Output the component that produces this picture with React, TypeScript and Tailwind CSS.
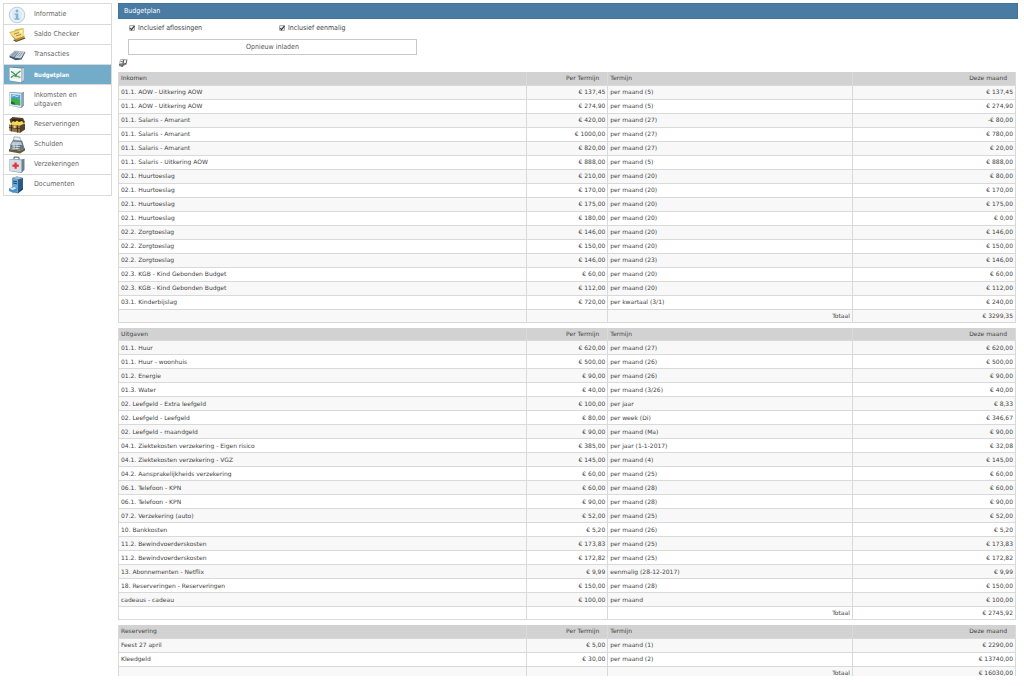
import { ReactNode, useState } from "react";
import clsx from "clsx";

type Row = [name: string, amount: string, term: string, month: string];

interface BudgetTableProps {
  title: string;
  rows: Row[];
  total: string;
}

const income: Row[] = [
  ["01.1. AOW - Uitkering AOW", "€ 137,45", "per maand (5)", "€ 137,45"],
  ["01.1. AOW - Uitkering AOW", "€ 274,90", "per maand (5)", "€ 274,90"],
  ["01.1. Salaris - Amarant", "€ 420,00", "per maand (27)", "-€ 80,00"],
  ["01.1. Salaris - Amarant", "€ 1000,00", "per maand (27)", "€ 780,00"],
  ["01.1. Salaris - Amarant", "€ 820,00", "per maand (27)", "€ 20,00"],
  ["01.1. Salaris - Uitkering AOW", "€ 888,00", "per maand (5)", "€ 888,00"],
  ["02.1. Huurtoeslag", "€ 210,00", "per maand (20)", "€ 80,00"],
  ["02.1. Huurtoeslag", "€ 170,00", "per maand (20)", "€ 170,00"],
  ["02.1. Huurtoeslag", "€ 175,00", "per maand (20)", "€ 175,00"],
  ["02.1. Huurtoeslag", "€ 180,00", "per maand (20)", "€ 0,00"],
  ["02.2. Zorgtoeslag", "€ 146,00", "per maand (20)", "€ 146,00"],
  ["02.2. Zorgtoeslag", "€ 150,00", "per maand (20)", "€ 150,00"],
  ["02.2. Zorgtoeslag", "€ 146,00", "per maand (23)", "€ 146,00"],
  ["02.3. KGB - Kind Gebonden Budget", "€ 60,00", "per maand (20)", "€ 60,00"],
  ["02.3. KGB - Kind Gebonden Budget", "€ 112,00", "per maand (20)", "€ 112,00"],
  ["03.1. Kinderbijslag", "€ 720,00", "per kwartaal (3/1)", "€ 240,00"],
];

const expenses: Row[] = [
  ["01.1. Huur", "€ 620,00", "per maand (27)", "€ 620,00"],
  ["01.1. Huur - woonhuis", "€ 500,00", "per maand (26)", "€ 500,00"],
  ["01.2. Energie", "€ 90,00", "per maand (26)", "€ 90,00"],
  ["01.3. Water", "€ 40,00", "per maand (3/26)", "€ 40,00"],
  ["02. Leefgeld - Extra leefgeld", "€ 100,00", "per jaar", "€ 8,33"],
  ["02. Leefgeld - Leefgeld", "€ 80,00", "per week (Di)", "€ 346,67"],
  ["02. Leefgeld - maandgeld", "€ 90,00", "per maand (Ma)", "€ 90,00"],
  ["04.1. Ziektekosten verzekering - Eigen risico", "€ 385,00", "per jaar (1-1-2017)", "€ 32,08"],
  ["04.1. Ziektekosten verzekering - VGZ", "€ 145,00", "per maand (4)", "€ 145,00"],
  ["04.2. Aansprakelijkheids verzekering", "€ 60,00", "per maand (25)", "€ 60,00"],
  ["06.1. Telefoon - KPN", "€ 60,00", "per maand (28)", "€ 60,00"],
  ["06.1. Telefoon - KPN", "€ 90,00", "per maand (28)", "€ 90,00"],
  ["07.2. Verzekering (auto)", "€ 52,00", "per maand (25)", "€ 52,00"],
  ["10. Bankkosten", "€ 5,20", "per maand (26)", "€ 5,20"],
  ["11.2. Bewindvoerderskosten", "€ 173,83", "per maand (25)", "€ 173,83"],
  ["11.2. Bewindvoerderskosten", "€ 172,82", "per maand (25)", "€ 172,82"],
  ["13. Abonnementen - Netflix", "€ 9,99", "eenmalig (28-12-2017)", "€ 9,99"],
  ["18. Reserveringen - Reserveringen", "€ 150,00", "per maand (28)", "€ 150,00"],
  ["cadeaus - cadeau", "€ 100,00", "per maand", "€ 100,00"],
];

const reservations: Row[] = [
  ["Feest 27 april", "€ 5,00", "per maand (1)", "€ 2290,00"],
  ["Kleedgeld", "€ 30,00", "per maand (2)", "€ 13740,00"],
];

// Menu icons, all drawn on a 18x18 grid
const icons: Record<string, ReactNode> = {
  info: (
    <>
      <circle cx="9" cy="9" r="7.8" fill="#dcebf5" stroke="#b9d0e0" />
      <circle cx="9" cy="9" r="6.2" fill="none" stroke="#f4f9fc" />
      <circle cx="9" cy="5" r="1.4" fill="#84b1d0" />
      <path d="M6.500 7.400h3.800v5h1.400v1.400H6.400v-1.400h1.400V8.800H6.500z" fill="#84b1d0" />
    </>
  ),
  saldo: (
    <>
      <path d="M5 14l11-3 1.500 1.500L8 16z" fill="#4f4a3c" />
      <path d="M1 6l5-1 1-1.500L15.500 2l.8 9L8 14z" fill="#dcb443" />
      <path d="M2 7l13-4 1.500 7L8 13z" fill="#f4dc86" />
      <path d="M1 6.500l6.500 6.500 9-3-.5 2-8 3z" fill="#b98c2d" />
      <path d="M6 8l5-1.400M8 10l5-1.600" stroke="#93793a" strokeWidth="0.8" />
      <circle cx="13" cy="5.500" r="1.3" fill="#fdf8e2" />
    </>
  ),
  transacties: (
    <>
      <path d="M1 11l6-6 4 .6L17.500 6l-4 7.500-6 .8z" fill="#43586b" />
      <path d="M1 9.500L7 4.500l4 .8-5 6z" fill="#a1b2c2" />
      <path d="M6.500 11.800L11 5.300l6 .2-4 6.700z" fill="#c6d2dd" />
      <path d="M4 9.500l4-3.500M9 10l3.500-3.500M11 10.500l3.500-4" stroke="#71869a" strokeWidth="0.7" />
    </>
  ),
  budget: (
    <>
      <path d="M1.500 1l12 .8L16 1v13.500L13.500 17 1.500 14.500z" fill="#5c7688" />
      <path d="M1.500 1.500l12 1V16.500l-12-2z" fill="#f7fbf6" />
      <path d="M13.500 2.500L16 1.500v12.700L13.500 16z" fill="#c1ced6" />
      <path d="M3 5.500l9 .8M3 8.500l9 .8M3 11.500l9 1" stroke="#c9dccf" strokeWidth="0.6" />
      <path d="M3 5.500l3 2 3 3 3.500.8M2.800 11.500l2.700-2 2 .8L9 7.500l3.500-2.500" fill="none" stroke="#3a8a55" strokeWidth="1.1" />
    </>
  ),
  uitgaven: (
    <>
      <path d="M1.500 1l12 .8L16 1v13.500L13.500 17 1.500 14.500z" fill="#65808f" />
      <path d="M1.500 1.500l12 1V16.500l-12-2z" fill="#dbe9f1" />
      <path d="M13.500 2.500L16 1.500v12.700L13.500 16z" fill="#8ea5b3" />
      <path d="M3 3.200l9.200.8v10.500L3 13z" fill="#4c9fdd" />
      <path d="M3.500 5l3-.5 2 1 2-.5" fill="none" stroke="#d3ebfa" />
      <path d="M3 8l2-1.500 2 1L9 7l1.500 1.500 1.700 1v5L3 13z" fill="#43ad4d" />
      <path d="M3 10.500l3 .5 1.500 2.700L3 13z" fill="#1c6f31" />
    </>
  ),
  reserveringen: (
    <>
      <path d="M1.500 3.500l3-2.500L15 2l2 4-2 2.500L3 8z" fill="#5a4328" />
      <path d="M4 3l10 .8 1.500 3L4 7z" fill="#2f2417" />
      <path d="M3 7.500l2-2.500 2 1 2-1.500L11 6l3-1 2 2.500-3 2H3z" fill="#f3d94e" />
      <path d="M1 8.500l11 1V17L1.500 15z" fill="#8d7148" />
      <path d="M12 9.500l5-2v6L12 17z" fill="#5b4226" />
      <path d="M1 11.500l11 1.200M3.500 8.700v6.600M9.500 9.500v7" stroke="#3a2b19" strokeWidth="0.8" />
      <rect x="5.500" y="9.500" width="2.200" height="2.600" fill="#e9d27a" />
    </>
  ),
  schulden: (
    <>
      <path d="M1 13l11 1.500 5-2.500v2.500L12 17.500 1 15.500z" fill="#6c5a35" />
      <path d="M2.500 8L5 4l9 .5 2.500 8-4.500 2L2 13z" fill="#657784" />
      <path d="M5.500 4L6 .8l6 .5.500 3.500z" fill="#edf3f6" stroke="#7b8d9a" strokeWidth="0.6" />
      <path d="M3 8l2-2.500 8 .6 1 2.900-10 .2z" fill="#b8c8d3" />
      <path d="M4 10l8 .6M3.500 12l8 .8M6 7v6M9 7.500v6" stroke="#e6eef2" strokeWidth="0.7" />
    </>
  ),
  verzekeringen: (
    <>
      <path d="M6 3V1l5 .3V3.500" fill="none" stroke="#4e6270" />
      <path d="M1.500 3l12 .5 3-.8v11L13.500 17 1.500 15z" fill="#6b808d" />
      <path d="M1.500 3.200l12 1V16.500l-12-1.700z" fill="#d3dde3" />
      <path d="M6.500 6.500h2.200v2h2.100v2.200H8.700v2.100H6.500v-2.100H4.400V8.500h2.100z" fill="#e8303c" />
    </>
  ),
  documenten: (
    <>
      <path d="M4 2l5-1.500 6 1.500v11.500L10 17.500l-6-2z" fill="#2a5b87" />
      <path d="M4 2l6 1.500v13.500l-6-2z" fill="#69aad8" />
      <path d="M4 2l5-1.500 6 1.500-5 1.500z" fill="#a4bccd" />
      <path d="M5 5l4 .8M5 7l4 .8" stroke="#23486a" />
      <path d="M1 12.500l5-2 3 1.500v3L5.500 17 1 15z" fill="#4b8fc4" />
      <path d="M1.500 12.500L6.500 11l2 1.200-4 1.800z" fill="#dbeaf4" />
      <path d="M11.500 15l3-2.500" stroke="#1a2b3a" />
    </>
  ),
};

const menu = [
  { label: "Informatie", icon: "info" },
  { label: "Saldo Checker", icon: "saldo" },
  { label: "Transacties", icon: "transacties" },
  { label: "Budgetplan", icon: "budget" },
  { label: "Inkomsten en uitgaven", icon: "uitgaven", tall: true },
  { label: "Reserveringen", icon: "reserveringen" },
  { label: "Schulden", icon: "schulden" },
  { label: "Verzekeringen", icon: "verzekeringen" },
  { label: "Documenten", icon: "documenten" },
];

function Sidebar() {
  return (
    <nav className="w-[109px] shrink-0">
      <ul className="border border-[#d9d9d9] py-px">
        {menu.map((item) => {
          const active = item.label === "Budgetplan";
          return (
            <li key={item.label} className="border-b border-[#d9d9d9] last:border-b-0">
              <a
                href="#"
                className={clsx(
                  "flex items-center pl-1",
                  item.tall ? "h-[29px]" : "h-[19px]",
                  active ? "bg-[#72acc8] text-[6px] font-bold text-white" : "text-[#666]"
                )}
              >
                <svg viewBox="0 0 18 18" className="mr-2 size-[18px] shrink-0">
                  {icons[item.icon]}
                </svg>
                <span className="w-[60px] leading-[9px]">{item.label}</span>
              </a>
            </li>
          );
        })}
      </ul>
    </nav>
  );
}

function Checkbox({ id, label }: { id: string; label: string }) {
  const [checked, setChecked] = useState(true);

  return (
    <div className="flex w-[150px] items-center">
      <span className="relative mr-[3px] size-[6px]">
        <input
          id={id}
          type="checkbox"
          checked={checked}
          onChange={(e) => setChecked(e.target.checked)}
          className="block size-full appearance-none rounded-[1px] border border-[#aaa] bg-[#eee]"
        />
        {checked && (
          <svg viewBox="0 0 6 6" className="pointer-events-none absolute inset-0 size-full">
            <path d="M1 3l1.500 1.700L5.500 0.800" fill="none" stroke="#333" strokeWidth="1.1" />
          </svg>
        )}
      </span>
      <label htmlFor={id}>{label}</label>
    </div>
  );
}

function BudgetTable({ title, rows, total }: BudgetTableProps) {
  return (
    <table className="w-full table-fixed border-collapse text-[6px] leading-[8px] [&_td]:border [&_td]:border-[#d9d9d9] [&_td]:px-[2px] [&_td]:py-0">
      <thead>
        <tr className="h-[13px] bg-[#d2d2d2] text-[#444] [&>th]:border-x [&>th]:border-[#dadada] [&>th]:py-0 [&>th]:font-normal">
          <th className="w-5/11 px-[2px] text-left">{title}</th>
          <th className="w-1/11 px-2 text-right">Per Termijn</th>
          <th className="w-3/11 px-[2px] text-left">Termijn</th>
          <th className="w-2/11 px-2 text-right">Deze maand</th>
        </tr>
      </thead>
      <tbody>
        {rows.map(([name, amount, term, month], i) => (
          <tr key={i} className="h-[14px] odd:bg-[#f8f8f8]">
            <td>{name}</td>
            <td className="text-right">{amount}</td>
            <td>{term}</td>
            <td className="text-right">{month}</td>
          </tr>
        ))}
        <tr className="h-[13px] odd:bg-[#f8f8f8]">
          <td></td>
          <td></td>
          <td className="text-right">Totaal</td>
          <td className="text-right">{total}</td>
        </tr>
      </tbody>
    </table>
  );
}

export default function App() {
  return (
    <div className="flex h-[calc(100vh-10px)] gap-[6px] overflow-hidden bg-white pt-[3px] pr-[6px] pl-[3px] font-['DejaVu_Sans_Condensed',sans-serif] text-[7px] text-[#444]">
      <Sidebar />
      <main className="min-w-0 flex-1">
        <h1 className="flex h-4 items-center border border-[#41739c] bg-[#4a7ba3] px-[5px] text-white">
          Budgetplan
        </h1>

        <div className="flex h-[18px] items-center pl-[11px]">
          <Checkbox id="aflossingen" label="Inclusief aflossingen" />
          <Checkbox id="eenmalig" label="Inclusief eenmalig" />
        </div>
        <button
          type="button"
          className="mt-[2px] ml-[10px] block h-4 w-[289px] border border-[#c8c8c8] bg-white text-[#555]"
        >
          Opnieuw inladen
        </button>

        <button type="button" aria-label="Afdrukken" className="mt-[3px] block">
          <svg viewBox="0 0 10 10" className="block size-[10px]">
            <path d="M2 1.500l3-.5 4 .5L8 6.500 4 9 .8 8z" fill="#9a9a9a" />
            <path d="M2.500 2l2.500-.3-.8 3.300-2.500.3zM6 2l2.500.3L7.800 5l-2.300.3z" fill="#f0f0f0" />
            <path d="M1 6.500l3 .8 4-2M4 9l.5-2M5.800 2L5 6M2.500 3.500h2M9 1.500L8 6.500" fill="none" stroke="#444" strokeWidth="0.7" />
          </svg>
        </button>

        <div className="mt-1 mr-[2px] flex flex-col gap-[5px] font-['DejaVu_Sans',sans-serif]">
          <BudgetTable title="Inkomen" rows={income} total="€ 3299,35" />
          <BudgetTable title="Uitgaven" rows={expenses} total="€ 2745,92" />
          <BudgetTable title="Reservering" rows={reservations} total="€ 16030,00" />
        </div>
      </main>
    </div>
  );
}
